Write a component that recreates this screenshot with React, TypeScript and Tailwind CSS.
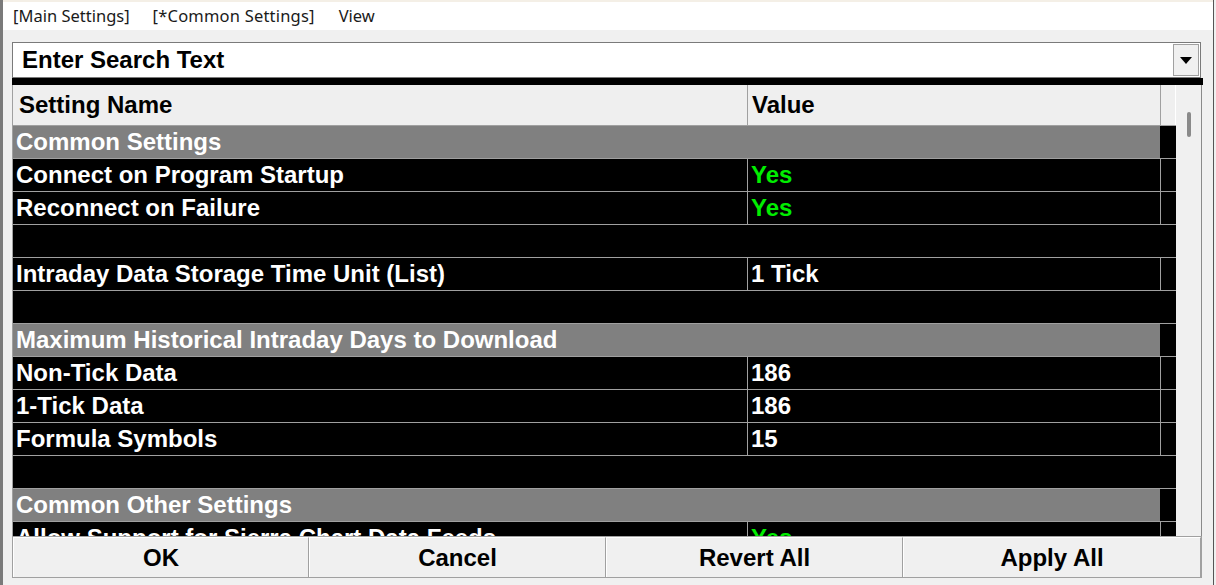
import React from 'react';

type Row =
  | { kind: 'group'; name: string }
  | { kind: 'item'; name: string; value: string; green?: boolean }
  | { kind: 'blank' };

const rows: Row[] = [
  { kind: 'group', name: 'Common Settings' },
  { kind: 'item', name: 'Connect on Program Startup', value: 'Yes', green: true },
  { kind: 'item', name: 'Reconnect on Failure', value: 'Yes', green: true },
  { kind: 'blank' },
  { kind: 'item', name: 'Intraday Data Storage Time Unit (List)', value: '1 Tick' },
  { kind: 'blank' },
  { kind: 'group', name: 'Maximum Historical Intraday Days to Download' },
  { kind: 'item', name: 'Non-Tick Data', value: '186' },
  { kind: 'item', name: '1-Tick Data', value: '186' },
  { kind: 'item', name: 'Formula Symbols', value: '15' },
  { kind: 'blank' },
  { kind: 'group', name: 'Common Other Settings' },
  { kind: 'item', name: 'Allow Support for Sierra Chart Data Feeds', value: 'Yes', green: true },
];

function SettingRow({ row }: { row: Row }) {
  if (row.kind === 'blank') {
    return <div className="h-[33px] shrink-0 bg-black border-b border-[#a0a0a0]" />;
  }
  if (row.kind === 'group') {
    return (
      <div className="h-[33px] shrink-0 flex border-b border-[#a0a0a0]">
        <div className="w-[1147px] bg-[#808080] text-white flex items-center pl-[3px]">{row.name}</div>
        <div className="flex-1 bg-black" />
      </div>
    );
  }
  return (
    <div className="h-[33px] shrink-0 flex bg-black border-b border-[#a0a0a0] overflow-hidden">
      <div className="w-[734px] text-white flex items-center pl-[3px] whitespace-nowrap overflow-hidden leading-none">{row.name}</div>
      <div
        className={`w-[413px] border-l border-[#a0a0a0] flex items-center pl-[3px] leading-none ${
          row.green ? 'text-[#00ee00]' : 'text-white'
        }`}
      >
        {row.value}
      </div>
      <div className="flex-1 border-l border-[#a0a0a0]" />
    </div>
  );
}

export default function App() {
  const buttons = [
    { label: 'OK', w: 'w-[296px]' },
    { label: 'Cancel', w: 'w-[297px]' },
    { label: 'Revert All', w: 'w-[297px]' },
    { label: 'Apply All', w: 'flex-1' },
  ];

  return (
    <div className="w-[1216px] h-[585px] flex bg-[#f0f0f0] overflow-hidden font-['Liberation_Sans',Arial,sans-serif] select-none">
      {/* edge of window behind */}
      <div className="w-[3px] shrink-0 bg-[#7a7a7a]" />

      <div className="flex-1 flex flex-col min-w-0">
        <div className="h-[2px] shrink-0 bg-[#f4efe6]" />

        {/* Menu bar */}
        <div className="h-[28px] shrink-0 bg-white flex items-center pl-[10px] font-['Noto_Sans',sans-serif] text-[16.5px] text-[#1a1a1a]">
          <span>[Main Settings]</span>
          <span className="ml-[23px] tracking-[0.2px]">[*Common Settings]</span>
          <span className="ml-[24px]">View</span>
        </div>

        <div className="flex-1 flex flex-col pl-[9px] pr-[11px] pt-[12px]">
          {/* Search combo */}
          <div className="h-[36px] shrink-0 flex items-stretch border border-[#7a7a7a] bg-white mr-[1px]">
            <div className="flex-1 flex items-center pl-[9px] text-[24px] font-bold text-black">Enter Search Text</div>
            <div className="w-[26px] m-[1px] bg-[#f0f0f0] border border-[#a0a0a0] flex items-center justify-center">
              <svg width="12" height="7" viewBox="0 0 12 7">
                <path d="M0 0 H12 L6 7 Z" fill="#000" />
              </svg>
            </div>
          </div>

          <div className="h-[7px] shrink-0 bg-black mr-[-1px]" />

          {/* Table + scrollbar */}
          <div className="h-[451px] shrink-0 flex border-l border-[#a0a0a0] text-[24px] font-bold">
            <div className="w-[1163px] flex flex-col overflow-hidden">
              <div className="h-[41px] shrink-0 flex bg-[#efefef] border-b border-[#a0a0a0] text-black">
                <div className="w-[734px] flex items-center pl-[6px]">Setting Name</div>
                <div className="w-[413px] border-l border-[#a0a0a0] flex items-center pl-[4px]">Value</div>
                <div className="flex-1 border-l border-[#a0a0a0] border-r border-r-white" />
              </div>
              {rows.map((r, i) => (
                <SettingRow key={i} row={r} />
              ))}
            </div>
            <div className="flex-1 bg-[#f0f0f0] border-r border-[#8a8a8a] relative">
              <div className="absolute left-[11px] top-[27px] w-[4px] h-[25px] rounded-full bg-[#8a8a8a]" />
            </div>
          </div>

          {/* Buttons */}
          <div className="h-[42px] shrink-0 flex border border-[#a0a0a0]">
            {buttons.map((b) => (
              <div
                key={b.label}
                className={`${b.w} flex items-center justify-center bg-[#f0f0f0] border-t border-l border-white border-r border-r-[#a0a0a0] text-[24px] font-bold text-black`}
              >
                {b.label}
              </div>
            ))}
          </div>
        </div>
      </div>

      {/* right window edge */}
      <div className="w-[3px] shrink-0 border-l border-[#555] bg-[#f0f0f0]" />
    </div>
  );
}
